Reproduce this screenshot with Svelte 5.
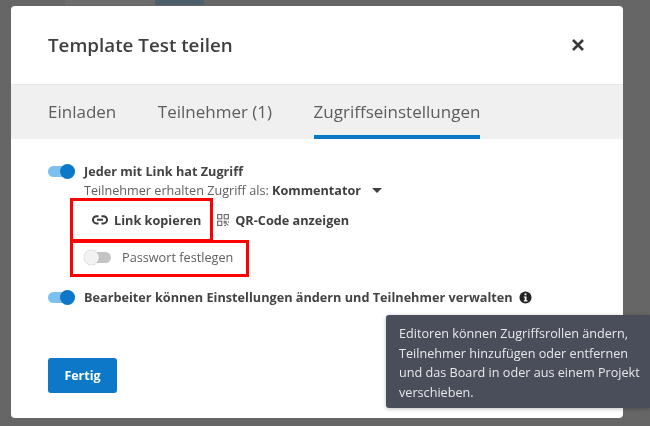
<script>
  const tabs = ['Einladen', 'Teilnehmer (1)', 'Zugriffseinstellungen'];
</script>

<div class="backdrop">
  <div class="topstrip"><span class="s1"></span><span class="s2"></span></div>
  <section class="modal">
    <header>
      <h1>Template Test teilen</h1>
      <svg class="close" viewBox="0 0 14 14" width="14" height="14"><path d="M2 2L12 12M12 2L2 12" stroke="#3a3a3c" stroke-width="2.6" fill="none"/></svg>
    </header>
    <nav>
      {#each tabs as t, i}
        <div class="tab" class:active={i === 2}>{t}</div>
      {/each}
    </nav>
    <div class="body">
      <div class="row">
        <span class="toggle on"><i></i></span>
        <div class="label">Jeder mit Link hat Zugriff</div>
      </div>
      <div class="sub">Teilnehmer erhalten Zugriff als: <b>Kommentator</b><span class="caret"></span></div>
      <div class="actions">
        <span class="act first">
          <svg viewBox="0 0 16 16" width="16" height="16" fill="none" stroke="#3a3a3c" stroke-width="2"><path d="M6.5 4.2H4.6a3.6 3.6 0 0 0 0 7.2h1.9M9.5 4.2h1.9a3.6 3.6 0 0 1 0 7.2H9.5M5 7.8h6"/></svg>
          Link kopieren
        </span>
        <span class="act">
          <svg viewBox="0 0 12 12" width="12" height="12" fill="none" stroke="#6a6a6c" stroke-width="1.1"><rect x=".6" y=".6" width="4.2" height="4.2"/><rect x="7.2" y=".6" width="4.2" height="4.2"/><rect x=".6" y="7.2" width="4.2" height="4.2"/><path d="M7.2 7.2h1.8v1.8H7.2zM11.4 7.2v1.5M9 9.4l2.4 2M7.2 11.4h1.8"/></svg>
          QR-Code anzeigen
        </span>
      </div>
      <div class="row pw">
        <span class="toggle off"><i></i></span>
        <div class="plabel">Passwort festlegen</div>
      </div>
      <div class="row edit">
        <span class="toggle on"><i></i></span>
        <div class="label">Bearbeiter können Einstellungen ändern und Teilnehmer verwalten</div>
        <svg class="info" viewBox="0 0 14 14" width="13" height="13"><circle cx="7" cy="7" r="6.5" fill="#232325"/><rect x="6" y="2.6" width="2" height="2" fill="#fff"/><path d="M5.2 5.8h2.9v4.2h1v1.2H5.2V10h1V7h-1z" fill="#fff"/></svg>
      </div>
      <button>Fertig</button>
    </div>
  </section>
  <div class="tooltip">Editoren können Zugriffsrollen ändern, Teilnehmer hinzufügen oder entfernen und das Board in oder aus einem Projekt verschieben.</div>
  <div class="mark m1"></div>
  <div class="mark m2"></div>
</div>

<style>
  :global(body) { margin: 0; }
  .backdrop {
    position: relative;
    width: 650px;
    height: 426px;
    overflow: hidden;
    background: #666;
    padding: 6px 27px 8px 11px;
    box-sizing: border-box;
    font-family: "Open Sans", sans-serif;
    color: #3a3a3c;
    filter: blur(0.45px);
  }
  .topstrip { position: absolute; inset: 0 0 auto 0; height: 5px; }
  .s1 { position: absolute; left: 65px; width: 90px; height: 5px; background: #6c6c6c; }
  .s2 { position: absolute; left: 155px; width: 49px; height: 5px; background: #4e5f6c; }
  .modal {
    position: relative;
    height: 100%;
    background: #fff;
    border-radius: 4px;
    display: flex;
    flex-direction: column;
  }
  header {
    height: 79px;
    box-sizing: border-box;
    display: flex;
    align-items: center;
    justify-content: space-between;
    padding: 0 38px 1px 37px;
    border-bottom: 1px solid #e6e6e6;
  }
  h1 { margin: 0; font-size: 18.8px; font-weight: 600; color: #3f3f41; }
  nav {
    display: flex;
    gap: 41.5px;
    height: 54px;
    background: #f0f0f0;
    padding-left: 37px;
  }
  .tab {
    font-size: 17px;
    line-height: 54px;
    color: #5d5d5f;
    box-sizing: border-box;
    height: 54px;
  }
  .tab.active { border-bottom: 4px solid #0a78c8; }
  .body { position: relative; flex: 1; padding: 24px 37px 0; }
  .row { display: flex; align-items: center; }
  .toggle {
    position: relative;
    width: 27px;
    height: 11px;
    border-radius: 6px;
    flex: none;
    margin-right: 9px;
  }
  .toggle i {
    position: absolute;
    top: -2px;
    width: 15px;
    height: 15px;
    border-radius: 50%;
  }
  .toggle.on { background: #7cc0f0; }
  .toggle.on i { right: 0; background: #0d78c8; }
  .toggle.off { background: #c4c4c4; }
  .toggle.off i { left: 0; background: #f2f2f2; box-shadow: 0 0 1px #999; }
  .label { font-size: 12.7px; font-weight: 700; line-height: 16px; color: #444446; }
  .sub { margin-left: 36px; font-size: 12.65px; line-height: 18px; color: #5f5f61; margin-top: 2px; }
  .sub b { color: #3f3f41; }
  .caret {
    display: inline-block;
    margin-left: 11px;
    vertical-align: 2px;
    border-left: 5px solid transparent;
    border-right: 5px solid transparent;
    border-top: 5px solid #3f3f41;
  }
  .actions { display: flex; margin-top: 10px; height: 22px; align-items: center; margin-left: 44px; }
  .act { display: inline-flex; align-items: center; font-size: 12.7px; font-weight: 700; color: #3f3f41; gap: 6px; }
  .act.first { margin-right: 16px; }
  .pw { margin-top: 18px; margin-left: 36px; }
  .pw .toggle { margin-right: 11px; }
  .plabel { font-size: 12.7px; color: #5f5f61; line-height: 16px; }
  .edit { margin-top: 24px; }
  .info { margin-left: 6px; }
  button {
    position: absolute;
    left: 37px;
    bottom: 25px;
    width: 69px;
    height: 35px;
    border: 0;
    border-radius: 3px;
    background: #0d78c8;
    color: #fff;
    font: 700 12.5px "Open Sans", sans-serif;
  }
  .tooltip {
    position: absolute;
    left: 386px;
    top: 315px;
    width: 264px;
    height: 93px;
    box-sizing: border-box;
    background: #4a4d5a;
    color: #e8e8ea;
    border-radius: 3px 0 0 3px;
    padding: 9px 8px 0 13px;
    font-size: 12.65px;
    line-height: 19.5px;
    box-shadow: 0 1px 4px rgba(0,0,0,.25);
  }
  .mark { position: absolute; border: 3px solid #f00; box-sizing: border-box; }
  .m1 { left: 70px; top: 198px; width: 143px; height: 44px; }
  .m2 { left: 70px; top: 240px; width: 179px; height: 37px; }
</style>
